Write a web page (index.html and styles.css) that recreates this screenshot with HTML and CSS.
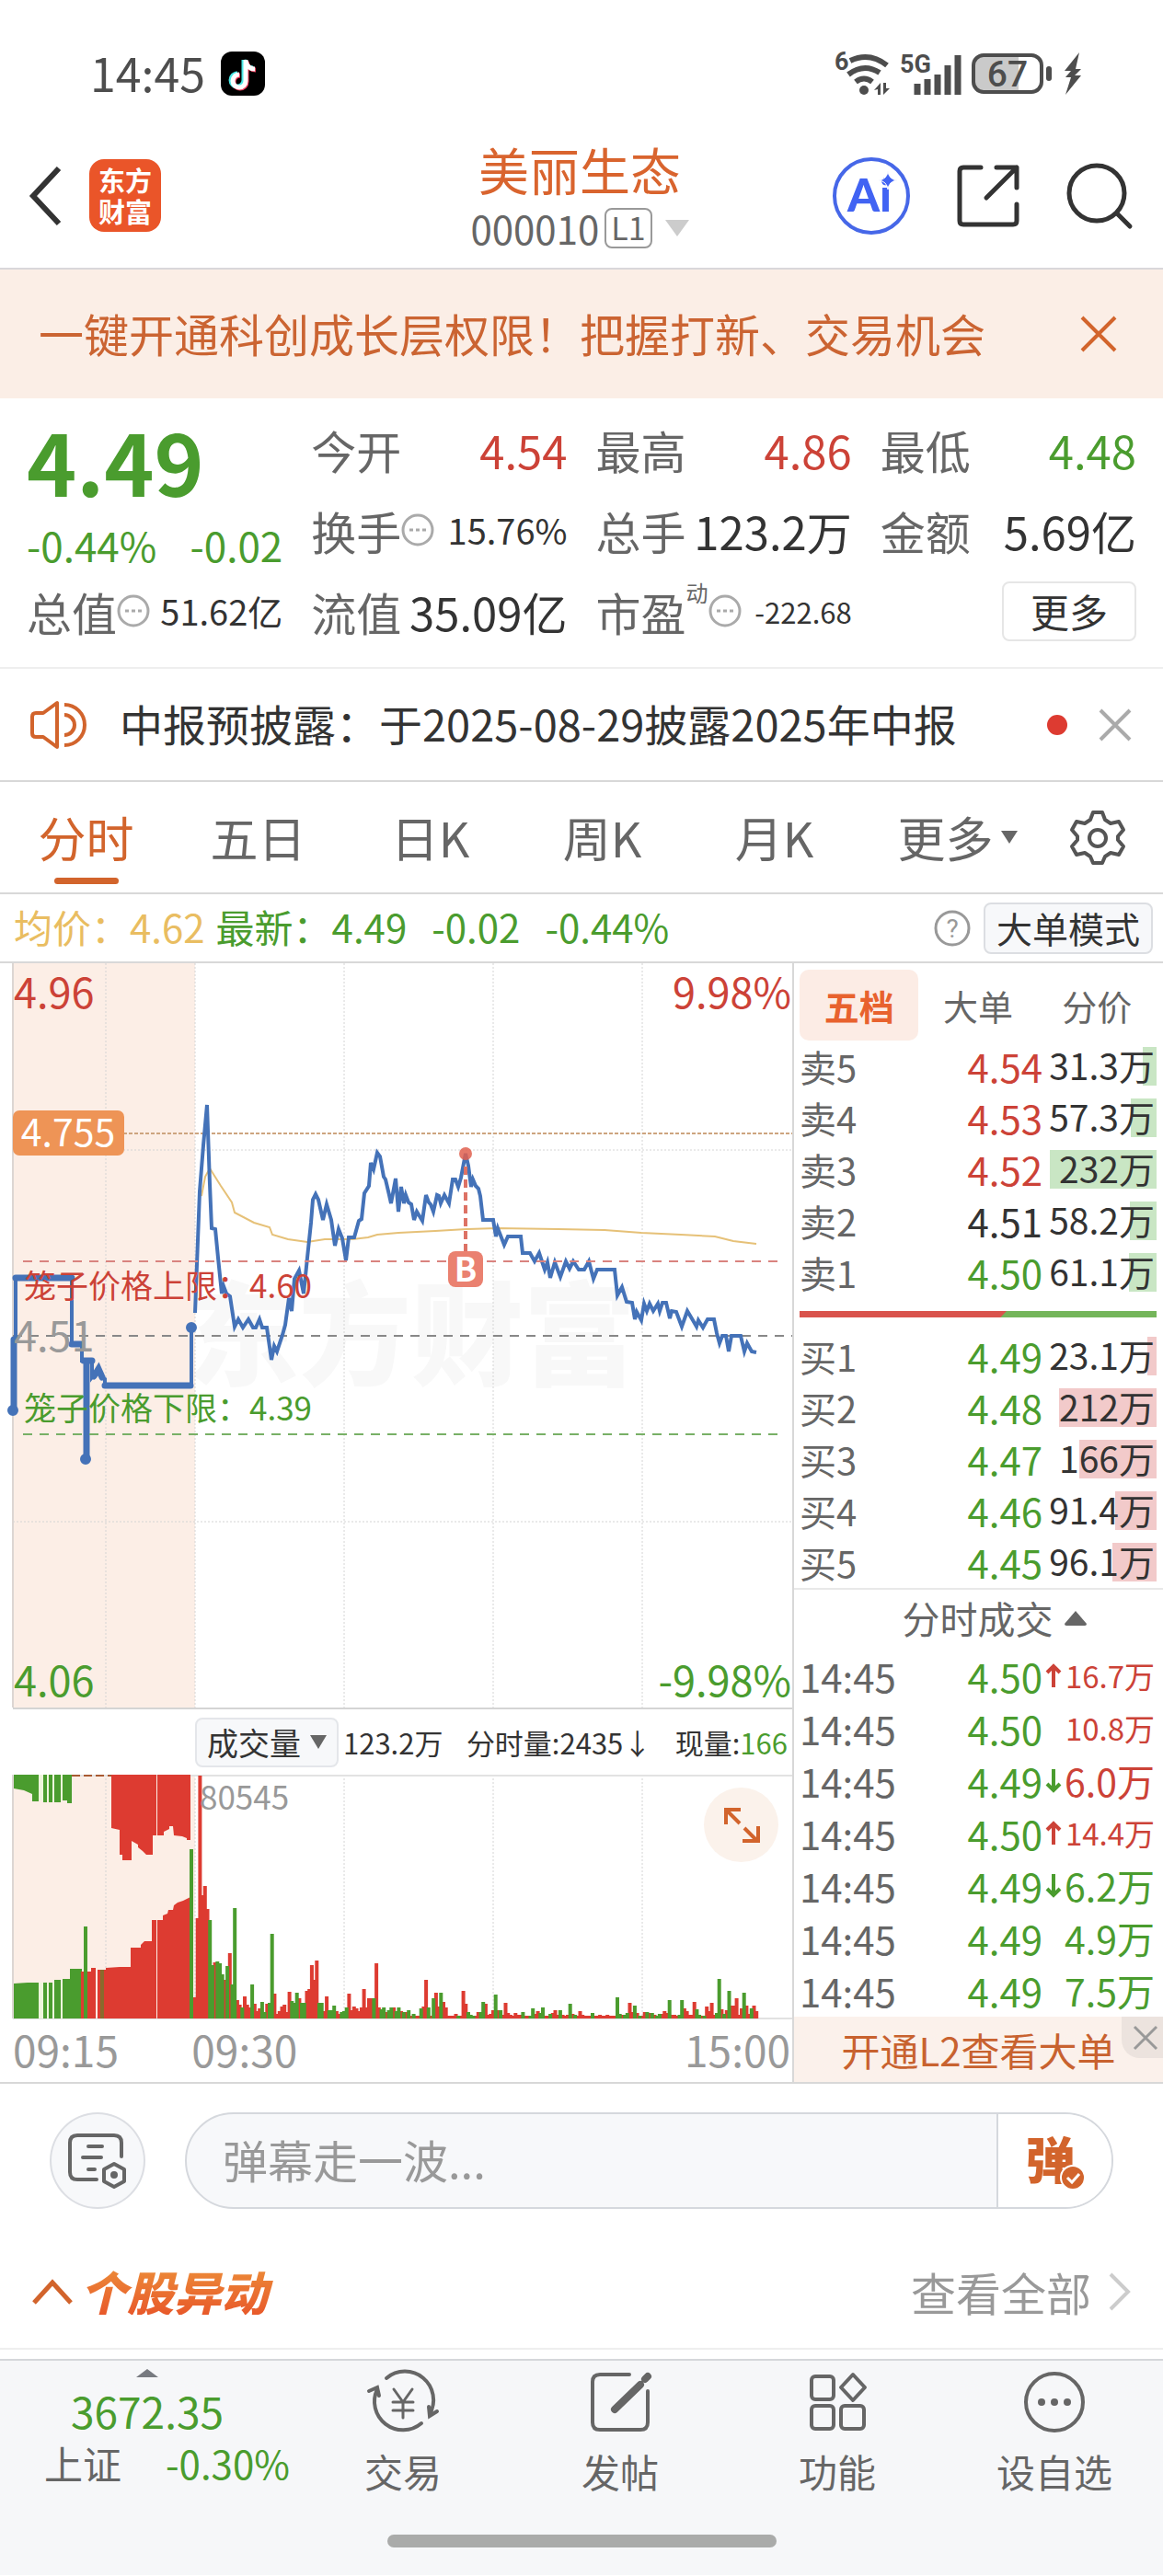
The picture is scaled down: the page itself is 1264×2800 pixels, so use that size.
FILE: index.html
```html
<!DOCTYPE html>
<html lang="zh-CN">
<head>
    <meta charset="UTF-8">
    <meta name="viewport" content="width=device-width, initial-scale=1.0">
    <title>美丽生态 000010</title>
    <link rel="stylesheet" href="styles.css">
</head>
<body>

<!-- 状态栏 -->
<div class="statusbar">
    <span class="clock">14:45</span>
    <svg class="tiktok" width="48" height="48" viewBox="0 0 48 48">
        <rect width="48" height="48" rx="12" fill="#000"/>
        <g fill="none" stroke-width="5">
            <path d="M25 9v22a7 7 0 1 1-7-7M25 9c1 6 5 9 10 9" stroke="#4de8e6"/>
            <path d="M28 11v22a7 7 0 1 1-7-7M28 11c1 6 5 9 10 9" stroke="#f0405f"/>
            <path d="M27 9v23a7 7 0 1 1-7-7M27 10c1 6 5 9 10 9" stroke="#fff"/>
        </g>
    </svg>
    <div class="status-icons">
        <svg width="62" height="48" viewBox="0 0 62 48">
            <text class="net-label" x="0" y="20">6</text>
            <g fill="none" stroke="#4d4d4d" stroke-width="6">
                <path d="M17 10Q38 0 57 15"/>
                <path d="M15 25Q32 12 49 23"/>
                <path d="M23 33Q32 26 41 33"/>
            </g>
            <circle cx="32" cy="42" r="5" fill="#4d4d4d"/>
            <path d="M43 42l7-8v13h-3v-6zM53 34h3v6h4l-7 7z" fill="#4d4d4d"/>
        </svg>
        <svg width="68" height="48" viewBox="0 0 68 48">
            <text class="net-label" x="0" y="23">5G</text>
            <path d="M19 35v12M30 30v17M41 25v22M52 15v32M63 4v43" stroke="#4d4d4d" stroke-width="7"/>
        </svg>
        <svg width="92" height="48" viewBox="0 0 92 48">
            <path d="M12 5h40v38h-40a8 8 0 0 1-8-8v-22a8 8 0 0 1 8-8z" fill="#cacaca"/>
            <rect x="3" y="4" width="74" height="40" rx="11" fill="none" stroke="#4d4d4d" stroke-width="4"/>
            <rect x="82" y="16" width="6" height="16" rx="3" fill="#4d4d4d"/>
            <text class="battery-text" x="40" y="38" text-anchor="middle">67</text>
        </svg>
        <svg width="20" height="48" viewBox="0 0 20 48">
            <path d="M17 1L1 21h7L2 28h6L2 47l17-21h-7l7-7h-6z" fill="#4d4d4d"/>
        </svg>
    </div>
</div>

<!-- 顶部标题 -->
<header class="header">
    <div class="header-left">
        <button class="icon-btn" aria-label="返回">
            <svg width="40" height="70" viewBox="0 0 40 70"><path d="M35 5L7 35l28 30" fill="none" stroke="#333" stroke-width="6"/></svg>
        </button>
        <a class="logo" href="#">东方<br>财富</a>
    </div>
    <div class="header-title">
        <h1>美丽生态</h1>
        <button class="code">
            <span>000010</span><span class="level">L1</span>
            <svg width="26" height="18" viewBox="0 0 26 18"><path d="M0 0h26L13 18z" fill="#ccc"/></svg>
        </button>
    </div>
    <div class="header-right">
        <button class="icon-btn" aria-label="Ai">
            <svg width="84" height="84" viewBox="0 0 84 84">
                <circle cx="42" cy="42" r="40" fill="#fff" stroke="#4667e8" stroke-width="4"/>
                <text class="ai-text" x="40" y="59" text-anchor="middle">Ai</text>
                <path d="M60 15q1 9 10 10-9 1-10 10-1-9-10-10 9-1 10-10z" fill="#4163f3" stroke="#fff" stroke-width="1"/>
            </svg>
        </button>
        <button class="icon-btn" aria-label="分享">
            <svg width="70" height="70" viewBox="0 0 70 70" fill="none" stroke="#333" stroke-width="5" stroke-linecap="round" stroke-linejoin="round">
                <path d="M27 4H8q-4 0-4 4v54q0 4 4 4h54q4 0 4-4V44M44 4h22v22M66 4L33 37"/>
            </svg>
        </button>
        <button class="icon-btn" aria-label="搜索">
            <svg width="72" height="72" viewBox="0 0 72 72" fill="none" stroke="#333" stroke-width="5" stroke-linecap="round">
                <circle cx="33" cy="33" r="30"/><path d="M55 55l14 14"/>
            </svg>
        </button>
    </div>
</header>

<!-- 开通提示 -->
<div class="banner">
    <a href="#">一键开通科创成长层权限！把握打新、交易机会</a>
    <button class="icon-btn" aria-label="关闭">
        <svg width="40" height="40" viewBox="0 0 40 40"><path d="M2 2l36 36M38 2L2 38" stroke="#d2642c" stroke-width="4"/></svg>
    </button>
</div>

<!-- 行情数据 -->
<section class="quote">
    <div class="quote-price">
        <strong>4.49</strong>
        <div class="quote-change"><span>-0.44%</span><span>-0.02</span></div>
    </div>
    <div class="cell"><span>今开</span><b class="up">4.54</b></div>
    <div class="cell"><span>最高</span><b class="up">4.86</b></div>
    <div class="cell"><span>最低</span><b class="down">4.48</b></div>
    <div class="cell"><span>换手<svg class="dots" viewBox="0 0 36 36"><circle cx="18" cy="18" r="16"/><path d="M9 18h4M16 18h4M23 18h4"/></svg></span><b class="medium">15.76%</b></div>
    <div class="cell"><span>总手</span><b>123.2万</b></div>
    <div class="cell"><span>金额</span><b>5.69亿</b></div>
    <div class="cell"><span>总值<svg class="dots" viewBox="0 0 36 36"><circle cx="18" cy="18" r="16"/><path d="M9 18h4M16 18h4M23 18h4"/></svg></span><b class="medium">51.62亿</b></div>
    <div class="cell"><span>流值</span><b>35.09亿</b></div>
    <div class="cell"><span>市盈<sup>动</sup><svg class="dots" viewBox="0 0 36 36"><circle cx="18" cy="18" r="16"/><path d="M9 18h4M16 18h4M23 18h4"/></svg></span><b class="small">-222.68</b></div>
    <div class="cell cell-more"><button class="more">更多</button></div>
</section>

<!-- 公告 -->
<div class="notice">
    <svg width="62" height="54" viewBox="0 0 62 54" fill="none" stroke="#d2642c" stroke-width="4" stroke-linejoin="round">
        <path d="M29 3v48L14 40H6q-4 0-4-4V18q0-4 4-4h8z"/>
        <path d="M37 5a22 22 0 0 1 0 44M37 16a11 11 0 0 1 0 22"/>
    </svg>
    <a href="#">中报预披露：于2025-08-29披露2025年中报</a>
    <i class="red-dot"></i>
    <button class="icon-btn" aria-label="关闭公告">
        <svg width="36" height="36" viewBox="0 0 36 36"><path d="M2 2l32 32M34 2L2 34" stroke="#aaa" stroke-width="4"/></svg>
    </button>
</div>

<nav class="tabs">
    <button class="tab active">分时</button>
    <button class="tab">五日</button>
    <button class="tab">日K</button>
    <button class="tab">周K</button>
    <button class="tab">月K</button>
    <button class="tab">更多<svg width="18" height="16" viewBox="0 0 18 16"><path d="M0 1h18L9 15z" fill="#666"/></svg></button>
    <button class="tab settings" aria-label="设置">
        <svg width="60" height="60" viewBox="0 0 60 60" fill="none" stroke="#555" stroke-width="4" stroke-linejoin="round">
            <path d="M25 3h10l3 8 6 4 9-2 5 9-6 7v4l6 7-5 9-9-2-6 4-3 7H25l-3-7-6-4-9 2-5-9 6-7v-4l-6-7 5-9 9 2 6-4z"/>
            <circle cx="30" cy="31" r="9"/>
        </svg>
    </button>
</nav>

<div class="info">
    <span class="avg">均价：4.62</span>
    <span class="down">最新：4.49</span>
    <span class="down info-delta">-0.02</span>
    <span class="down info-delta">-0.44%</span>
    <button class="icon-btn help" aria-label="帮助">
        <svg width="40" height="40" viewBox="0 0 40 40"><circle cx="20" cy="20" r="18" fill="none" stroke="#999" stroke-width="3"/><text class="help-text" x="20" y="30" text-anchor="middle">?</text></svg>
    </button>
    <button class="mode">大单模式</button>
</div>

<main class="main">
    <div class="charts">
        <!-- 分时走势 -->
        <svg class="chart" viewBox="0 0 861 811">
            <text class="watermark" x="203" y="449">东方财富</text>
            <rect x="14" y="0" width="198" height="809" fill="#fceee6"/>
            <g class="grid">
                <path d="M115 0V809M212 0V809M374 0V809M536 0V809M698 0V809M14 203H861M14 607H861"/>
            </g>
            <path d="M14 0V809" stroke="#dcd6d3" stroke-width="2"/>
            <path d="M14 810H861" stroke="#d4d4d4" stroke-width="2"/>
            <path d="M14 185H861" stroke="#cda47f" stroke-width="2" stroke-dasharray="4 2"/>
            <path d="M14 405H861" stroke="#888" stroke-width="2" stroke-dasharray="10 8"/>

            <polyline class="avg-line" points="219,253 223,232 228,223 240,242 252,260 255,271 276,282 293,287 296,295 313,300 334,303 353,300 383,300 400,298 410,295 433,293 473,291 507,289 540,288 607,289 657,290 697,293 740,295 777,297 797,302 822,305"/>

            <!-- 集合竞价 -->
            <g class="pre-line">
                <path d="M17 410V342H78V414H89V432H100V450L107 441 110 450 114 452V459H208V396"/>
                <path class="thick" d="M15 409V486M17 342H78M78 414H88M91 432H100M94 434V539M102 449L107 441 111 450M114 459H207"/>
                <circle cx="14" cy="486" r="4"/><circle cx="93" cy="539" r="4"/><circle cx="208" cy="396" r="4"/>
            </g>

            <polyline class="price-line" points="212,380 215,301 217,248 221,198 225,154 228,240 230,288 234,289 237,320 241,359 243,351 246,359 250,362 255,395 259,387 264,396 270,387 275,396 278,396 282,387 285,396 290,396 295,431 298,416 301,422 307,404 310,393 314,364 317,378 320,343 325,334 330,359 334,320 338,282 340,257 343,251 346,257 351,279 355,262 360,279 364,307 368,289 372,299 376,323 379,298 385,298 390,280 393,278 396,250 401,242 403,217 406,224 410,206 413,210 417,232 419,235 423,252 425,261 430,234 433,270 436,243 439,261 441,252 444,260 447,262 450,279 453,270 459,280 463,252 466,260 468,262 471,270 475,252 477,253 479,261 483,252 488,261 492,235 495,235 498,243 501,233 506,207 509,220 512,243 514,235 517,242 520,245 522,253 525,279 536,279 539,297 541,288 548,306 552,297 566,297 568,315 576,315 581,324 586,315 592,333 595,325 598,342 603,325 609,341 615,324 619,332 623,324 629,333 635,333 640,324 645,343 649,333 668,333 671,361 676,352 681,368 687,369 690,387 692,379 697,388 700,370 703,378 706,370 710,378 715,370 717,378 720,369 724,369 728,386 730,378 735,379 741,395 747,378 753,388 757,395 759,388 764,396 769,387 776,387 779,402 782,413 785,405 789,405 792,422 795,405 805,405 809,422 812,413 817,422 822,423"/>

            <path d="M25 324H848" stroke="#d9837f" stroke-width="2" stroke-dasharray="10 8"/>
            <path d="M25 512H848" stroke="#78b066" stroke-width="2" stroke-dasharray="10 8"/>
            <text class="cage up" x="26" y="364">笼子价格上限：4.60</text>
            <text class="cage down" x="26" y="497">笼子价格下限：4.39</text>

            <text class="axis up" x="15" y="49">4.96</text>
            <text class="axis up" x="860" y="49" text-anchor="end">9.98%</text>
            <text class="axis mid" x="15" y="422">4.51</text>
            <text class="axis down" x="15" y="797">4.06</text>
            <text class="axis down" x="860" y="797" text-anchor="end">-9.98%</text>

            <rect x="14" y="160" width="121" height="49" rx="7" fill="#ee9456"/>
            <text class="badge-text" x="74" y="199" text-anchor="middle">4.755</text>

            <!-- 买入点 -->
            <path d="M506 221V313" stroke="#dd7265" stroke-width="4" stroke-dasharray="9 5"/>
            <circle cx="506" cy="207" r="7" fill="#e0604f" fill-opacity=".85"/>
            <rect x="487" y="313" width="38" height="39" rx="8" fill="#ea8170"/>
            <text class="buy-text" x="506" y="346" text-anchor="middle">B</text>
        </svg>

        <div class="volume-bar">
            <div class="select">
                <select aria-label="指标"><option>成交量</option></select>
                <svg width="18" height="15" viewBox="0 0 18 15"><path d="M0 0h18L9 15z" fill="#666"/></svg>
            </div>
            <div class="volume-nums">
                <span>123.2万</span>
                <span>分时量:2435↓</span>
                <span>现量:<em class="down">166</em></span>
            </div>
        </div>

        <!-- 成交量 -->
        <div class="volume">
            <svg class="chart" viewBox="0 0 861 266">
                <rect x="14" y="0" width="198" height="265" fill="#fceee6"/>
                <g class="grid"><path d="M115 0V265M212 0V265M374 0V265M536 0V265M698 0V265"/></g>
                <path d="M14 0V265" stroke="#dcd6d3" stroke-width="2"/>
                <path d="M14 1H861M14 265H861" stroke="#e2e2e2" stroke-width="2"/>
                <path d="M42 0h26v28H42zM42 226h26v39H42z" fill="#eef5dc"/>
                <g fill="#4a9c2e">
                    <path d="M15 0V15L26 17 35 21V29H42V0zM47 0h4v30h-4zM53 0h4v30h-4zM59 0h7v30h-7zM68 0V28H73V31H78V0z"/>
                    <path d="M15 265V227L30 226H42V265zM47 226h4v39h-4zM53 226h4v39h-4zM59 223h7v42h-7zM68 222H76V211H89V265H68z"/>
                </g>
                <path d="M78 1H121" stroke="#a85a32" stroke-width="2" stroke-dasharray="9 4"/>
                <g fill="#dd3b31">
                    <path d="M121 0V58L130 60V87H133V93H143V72L150 76V79L155 83 159 87H166V66H170V0zM171 0V66H178V62L184 59V56H188L189 66 198 67 203 69V71H207V0z"/>
                    <path d="M88 265V214H99V210H104V265zM106 265V212H115V210L130 209H142V188H153V185L157 181H165V158H170V265zM171 265V158H177V153L182 151 183 147H188L189 142 193 139 199 137 207 133V265z"/>
                </g>
                <path d="M109 212h4v53h-4z" fill="#8a6a2c"/>
                <path d="M91 165h4v100h-4zM206 81h4v184h-4z" fill="#4a9c2e"/>
                <path id="volUp" stroke="#dd3b31" stroke-width="4"/>
                <path id="volDown" stroke="#4a9c2e" stroke-width="4"/>
                <text class="volume-max" x="217" y="38">80545</text>
            </svg>
            <button class="expand" aria-label="全屏">
                <svg width="40" height="40" viewBox="0 0 40 40" fill="none" stroke="#d2642c" stroke-width="4"><path d="M19 3H3v16M3 3l15 15M21 37h17V21M37 37L23 23"/></svg>
            </button>
        </div>
        <div class="times"><span>09:15</span><span>09:30</span><span>15:00</span></div>
    </div>

    <!-- 五档盘口 -->
    <aside class="side">
        <div class="side-tabs">
            <button class="active">五档</button>
            <button>大单</button>
            <button>分价</button>
        </div>
        <table class="book sell">
            <tr><th>卖5</th><td class="up">4.54</td><td class="qty"><i style="width:13%"></i><span>31.3万</span></td></tr>
            <tr><th>卖4</th><td class="up">4.53</td><td class="qty"><i style="width:24%"></i><span>57.3万</span></td></tr>
            <tr><th>卖3</th><td class="up">4.52</td><td class="qty"><i style="width:100%"></i><span>232万</span></td></tr>
            <tr><th>卖2</th><td>4.51</td><td class="qty"><i style="width:25%"></i><span>58.2万</span></td></tr>
            <tr><th>卖1</th><td class="down">4.50</td><td class="qty"><i style="width:26%"></i><span>61.1万</span></td></tr>
        </table>
        <div class="ratio"><i style="width:58%"></i></div>
        <table class="book buy">
            <tr><th>买1</th><td class="down">4.49</td><td class="qty"><i style="width:9%"></i><span>23.1万</span></td></tr>
            <tr><th>买2</th><td class="down">4.48</td><td class="qty"><i style="width:91%"></i><span>212万</span></td></tr>
            <tr><th>买3</th><td class="down">4.47</td><td class="qty"><i style="width:72%"></i><span>166万</span></td></tr>
            <tr><th>买4</th><td class="down">4.46</td><td class="qty"><i style="width:39%"></i><span>91.4万</span></td></tr>
            <tr><th>买5</th><td class="down">4.45</td><td class="qty"><i style="width:41%"></i><span>96.1万</span></td></tr>
        </table>
        <button class="deals-title">分时成交<svg width="24" height="16" viewBox="0 0 24 16"><path d="M12 0l12 14q0 2-2 2H2q-2 0-2-2z" fill="#666"/></svg></button>
        <table class="deals">
            <tr><th>14:45</th><td class="down">4.50</td><td class="arrow up"><svg viewBox="0 0 18 27"><path d="M9 26V3M2 10l7-7 7 7"/></svg></td><td class="up small">16.7万</td></tr>
            <tr><th>14:45</th><td class="down">4.50</td><td class="arrow"></td><td class="up small">10.8万</td></tr>
            <tr><th>14:45</th><td class="down">4.49</td><td class="arrow down"><svg viewBox="0 0 18 27"><path d="M9 1v23M2 17l7 7 7-7"/></svg></td><td class="up">6.0万</td></tr>
            <tr><th>14:45</th><td class="down">4.50</td><td class="arrow up"><svg viewBox="0 0 18 27"><path d="M9 26V3M2 10l7-7 7 7"/></svg></td><td class="up small">14.4万</td></tr>
            <tr><th>14:45</th><td class="down">4.49</td><td class="arrow down"><svg viewBox="0 0 18 27"><path d="M9 1v23M2 17l7 7 7-7"/></svg></td><td class="down">6.2万</td></tr>
            <tr><th>14:45</th><td class="down">4.49</td><td class="arrow"></td><td class="down">4.9万</td></tr>
            <tr><th>14:45</th><td class="down">4.49</td><td class="arrow"></td><td class="down">7.5万</td></tr>
        </table>
        <div class="promo">
            <a href="#">开通L2查看大单</a>
            <button class="promo-close" aria-label="关闭">
                <svg width="26" height="26" viewBox="0 0 26 26"><path d="M1 1l24 24M25 1L1 25" stroke="#999" stroke-width="3"/></svg>
            </button>
        </div>
    </aside>
</main>

<!-- 弹幕 -->
<div class="danmu">
    <button class="danmu-list" aria-label="弹幕设置">
        <svg width="66" height="62" viewBox="0 0 66 62" fill="none" stroke="#666" stroke-width="4" stroke-linecap="round" stroke-linejoin="round">
            <path d="M32 51H11q-8 0-8-8V11q0-8 8-8h40q8 0 8 8v15M23 15h15M17 27h20M23 40h7"/>
            <path d="M51 34l11 6v13l-11 6-11-6V40z"/><circle cx="51" cy="46" r="2"/>
        </svg>
    </button>
    <div class="danmu-box">
        <input type="text" aria-label="弹幕" placeholder="弹幕走一波...">
        <button class="danmu-switch">弹<svg width="28" height="28" viewBox="0 0 28 28"><circle cx="14" cy="14" r="13" fill="#d2642c" stroke="#fff" stroke-width="2"/><path d="M8 14l5 5 8-9" fill="none" stroke="#fff" stroke-width="3"/></svg></button>
    </div>
</div>

<div class="moves">
    <svg width="44" height="28" viewBox="0 0 44 28"><path d="M2 26L22 4l20 22" fill="none" stroke="#d2642c" stroke-width="5"/></svg>
    <h2>个股异动</h2>
    <a href="#">查看全部<svg width="26" height="44" viewBox="0 0 26 44"><path d="M3 3l19 19L3 41" fill="none" stroke="#ccc" stroke-width="4"/></svg></a>
</div>

<!-- 底部导航 -->
<footer class="footer">
    <div class="bottom">
        <a class="index" href="#">
            <svg width="24" height="9" viewBox="0 0 24 9"><path d="M12 0l12 9H0z" fill="#777a80"/></svg>
            <span class="down index-value">3672.35</span>
            <span class="index-row"><span>上证</span><span class="down">-0.30%</span></span>
        </a>
        <a href="#">
            <svg width="76" height="68" viewBox="0 0 76 68" fill="none" stroke="#666" stroke-width="4" stroke-linecap="round">
                <path d="M20 8a31 31 0 0 1 47 39M58 57A31 31 0 0 1 10 20M1 22l9-4 2 9M75 44l-8 5-1-10"/>
                <path d="M28 20l10 14 10-14M38 34v17M27 34h22M27 43h22" stroke-width="3"/>
            </svg>
            交易
        </a>
        <a href="#">
            <svg width="68" height="68" viewBox="0 0 68 68" fill="none" stroke="#666" stroke-width="4" stroke-linecap="round">
                <path d="M44 4H12q-8 0-8 8v44q0 8 8 8h44q8 0 8-8V22"/>
                <path d="M28 42L56 15M61 9l3-3" stroke-width="8"/>
            </svg>
            发帖
        </a>
        <a href="#">
            <svg width="68" height="68" viewBox="0 0 68 68" fill="none" stroke="#666" stroke-width="4" stroke-linejoin="round">
                <rect x="6" y="6" width="24" height="25" rx="4"/><rect x="6" y="38" width="24" height="25" rx="4"/><rect x="38" y="38" width="25" height="25" rx="4"/>
                <path d="M51 4l13 14-13 14-13-14z"/>
            </svg>
            功能
        </a>
        <a href="#">
            <svg width="68" height="68" viewBox="0 0 68 68" fill="none" stroke="#666" stroke-width="4">
                <circle cx="34" cy="34" r="31"/>
                <g fill="#666" stroke="none"><circle cx="20" cy="34" r="4"/><circle cx="34" cy="34" r="4"/><circle cx="48" cy="34" r="4"/></g>
            </svg>
            设自选
        </a>
    </div>
    <div class="home-bar"></div>
</footer>

<script src="chart.js"></script>
</body>
</html>
```
FILE: styles.css
```css
* {
    box-sizing: border-box;
}
body {
    margin: 0;
    background-color: #fff;
    color: #333;
    font-family: "Noto Sans CJK SC", "Noto Sans", sans-serif;
    font-size: 49px;
    line-height: 1;
}
button, input, select {
    font: inherit;
    color: inherit;
    background: none;
    border: none;
    padding: 0;
    margin: 0;
}
button {
    cursor: pointer;
}
a {
    color: inherit;
    text-decoration: none;
}
svg {
    display: block;
    flex: none;
    overflow: visible;
}
b, em, i, th {
    font-weight: 400;
    font-style: normal;
}
.up {
    color: #cc4237;
    fill: #cc4237;
}
.down {
    color: #4a9c2e;
    fill: #4a9c2e;
}
.icon-btn {
    display: flex;
}

/* 状态栏 */
.statusbar {
    display: flex;
    align-items: center;
    height: 134px;
    padding: 26px 88px 0 98px;
}
.clock {
    padding-bottom: 5px;
    font-size: 50px;
    color: #4d4d4d;
}
.tiktok {
    margin-left: 17px;
}
.status-icons {
    display: flex;
    gap: 9px;
    margin-left: auto;
}
.net-label {
    font-size: 27px;
    font-weight: 700;
    fill: #4d4d4d;
    font-family: Roboto, sans-serif;
}
.battery-text {
    font-size: 39px;
    font-weight: 500;
    fill: #4d4d4d;
    font-family: Roboto, sans-serif;
}

/* 标题 */
.header {
    display: grid;
    grid-template-columns: 1fr auto 1fr;
    align-items: center;
    min-height: 159px;
    padding: 0 33px 0 29px;
    border-bottom: 2px solid #d9d7da;
}
.header-left, .header-right {
    display: flex;
    align-items: center;
}
.header-left {
    gap: 28px;
}
.header-right {
    justify-content: flex-end;
    gap: 50px;
}
.logo {
    width: 78px;
    height: 79px;
    padding-top: 5px;
    border-radius: 16px;
    background-color: #ea5529;
    color: #fff;
    font-size: 29px;
    font-weight: 700;
    line-height: 34px;
    text-align: center;
}
.header-title {
    display: flex;
    flex-direction: column;
    align-items: center;
    gap: 16px;
}
h1 {
    margin: 0;
    font-size: 55px;
    font-weight: 400;
    color: #d9642e;
}
.code {
    display: flex;
    align-items: center;
    height: 42px;
    color: #666;
    font-size: 42px;
}
.level {
    margin: 0 14px 0 6px;
    padding: 2px 5px 4px;
    border: 2px solid #999;
    border-radius: 8px;
    font-size: 34px;
}
.ai-text {
    font-family: Lato, sans-serif;
    font-size: 50px;
    font-weight: 900;
    fill: #4163f3;
}

/* 提示条 */
.banner {
    display: flex;
    align-items: center;
    justify-content: space-between;
    min-height: 140px;
    padding: 0 50px 0 42px;
    background-color: #fbeee6;
    color: #cb6432;
}
.banner a {
    padding-bottom: 4px;
}

/* 行情 */
.quote {
    display: grid;
    grid-template-columns: repeat(4, 1fr);
    grid-auto-rows: 88px;
    column-gap: 31px;
    padding: 11px 29px 17px 29px;
    border-bottom: 2px solid #eee;
}
.quote-price {
    grid-row: span 2;
    color: #4a9c2e;
}
.quote-price strong {
    display: block;
    padding-top: 10px;
    font-size: 92px;
    font-weight: 700;
}
.quote-change {
    display: flex;
    justify-content: space-between;
    margin-top: 24px;
    font-size: 44px;
}
.cell {
    display: flex;
    align-items: center;
    justify-content: space-between;
    white-space: nowrap;
}
.cell span {
    display: flex;
    align-items: center;
    color: #666;
}
.cell .medium {
    font-size: 38px;
}
.cell .small {
    font-size: 31px;
}
.cell sup {
    align-self: flex-start;
    margin-top: -8px;
    font-size: 24px;
}
.dots {
    width: 36px;
    height: 36px;
    fill: none;
    stroke: #aaa;
    stroke-width: 3;
}
.cell-more {
    justify-content: flex-end;
}
.more {
    width: 146px;
    height: 65px;
    border: 2px solid #e6e6e6;
    border-radius: 8px;
    font-size: 42px;
}

/* 公告 */
.notice {
    display: flex;
    align-items: center;
    min-height: 123px;
    padding: 0 34px 0 33px;
    border-bottom: 2px solid #d8d8d8;
    font-size: 47px;
}
.notice a {
    flex: 1;
    margin-left: 35px;
    padding-bottom: 5px;
    white-space: nowrap;
}
.red-dot {
    width: 22px;
    height: 22px;
    margin-right: 34px;
    border-radius: 50%;
    background-color: #dd3b31;
}

/* 周期切换 */
.tabs {
    display: grid;
    grid-template-columns: repeat(5, 187fr) 211fr 118fr;
    min-height: 122px;
    border-bottom: 2px solid #d8d8d8;
}
.tab {
    display: flex;
    align-items: center;
    justify-content: center;
    gap: 8px;
    color: #666;
    font-size: 52px;
    position: relative;
}
.tab.active {
    color: #d2642c;
}
.tab.active::after {
    content: "";
    position: absolute;
    bottom: 9px;
    width: 70px;
    height: 7px;
    border-radius: 4px;
    background-color: #d2642c;
}
.tab.settings {
    padding-right: 24px;
}

.info {
    display: flex;
    align-items: center;
    min-height: 75px;
    padding: 0 11px 0 15px;
    border-bottom: 2px solid #d8d8d8;
    font-size: 42px;
}
.info span {
    padding-bottom: 4px;
}
.avg {
    margin-right: 12px;
    color: #e9bd61;
}
.info-delta {
    margin-left: 27px;
}
.help {
    margin: 0 14px 0 auto;
}
.help-text {
    font-family: Roboto, sans-serif;
    font-size: 28px;
    fill: #999;
}
.mode {
    padding: 0 12px;
    height: 56px;
    border: 2px solid #dcdee2;
    border-radius: 8px;
    background-color: #f7f8fa;
    font-size: 39px;
}

/* 主体 */
.main {
    display: grid;
    grid-template-columns: 861fr 403fr;
    border-bottom: 2px solid #d8d8d8;
}
.chart {
    width: 100%;
    height: auto;
}
.grid {
    fill: none;
    stroke: #d4d4d4;
    stroke-width: 1;
    stroke-dasharray: 2 2;
}
.watermark {
    font-size: 122px;
    font-weight: 900;
    fill: #f8f8f8;
}
.price-line, .avg-line, .pre-line path {
    fill: none;
}
.price-line {
    stroke: #4472b8;
    stroke-width: 4;
}
.avg-line {
    stroke: #e6c178;
    stroke-width: 2;
}
.pre-line {
    fill: #4472b8;
    stroke: #4472b8;
    stroke-width: 4;
}
.pre-line .thick {
    stroke-width: 7;
    stroke-linecap: round;
}
.cage {
    font-size: 35px;
}
.axis {
    font-size: 45px;
}
.mid {
    fill: #999;
}
.badge-text {
    font-size: 41px;
    fill: #fff;
}
.buy-text {
    font-size: 36px;
    font-weight: 700;
    fill: #fff;
}
.volume-bar {
    display: flex;
    align-items: center;
    height: 71px;
    padding: 0 5px 0 212px;
    font-size: 31px;
    white-space: nowrap;
}
.select {
    display: flex;
    align-items: center;
    height: 54px;
    padding: 0 11px;
    gap: 10px;
    border: 2px solid #e4e6ea;
    border-radius: 8px;
    background-color: #f7f8fa;
}
.select select {
    appearance: none;
    font-size: 34px;
}
.volume-nums {
    display: flex;
    flex: 1;
    justify-content: space-between;
    margin-left: 5px;
}
.volume {
    position: relative;
}
.volume-max {
    font-size: 35px;
    fill: #999;
}
.expand {
    position: absolute;
    top: 14px;
    right: 15px;
    display: flex;
    align-items: center;
    justify-content: center;
    width: 81px;
    height: 81px;
    border-radius: 50%;
    background-color: #fbf2eb;
}
.times {
    display: grid;
    grid-template-columns: 23% 1fr auto;
    align-items: center;
    height: 68px;
    padding: 0 2px 4px 14px;
    color: #999;
    font-size: 46px;
}

/* 右侧盘口 */
.side {
    display: flex;
    flex-direction: column;
    border-left: 2px solid #d8d8d8;
}
.side-tabs {
    display: grid;
    grid-template-columns: repeat(3, 1fr);
    margin: 7px 7px 0 6px;
}
.side-tabs button {
    height: 77px;
    border-radius: 10px;
    color: #666;
    font-size: 38px;
}
.side-tabs .active {
    background-color: #fcece5;
    color: #e8622e;
    font-weight: 700;
}
table {
    margin: 0 7px 0 6px;
}
th, td {
    padding: 0;
    text-align: right;
    white-space: nowrap;
}
th {
    text-align: left;
    color: #666;
}
.book, .book tbody, .deals, .deals tbody {
    display: block;
}
.book tr {
    display: grid;
    grid-template-columns: 100px 1fr 124px;
    align-items: center;
    height: 56px;
}
.book th {
    font-size: 40px;
}
.book td {
    font-size: 42px;
}
.book .qty {
    display: flex;
    align-items: center;
    justify-content: flex-end;
    position: relative;
    height: 42px;
    margin-left: 8px;
    font-size: 39px;
}
.qty i {
    position: absolute;
    top: 0;
    right: 0;
    height: 100%;
    background-color: #c9e6c4;
}
.buy .qty i {
    background-color: #f2caca;
}
.qty span {
    position: relative;
    padding: 0 2px 4px 0;
}
.ratio {
    margin: 14px 7px 14px 6px;
    background-color: #74b55a;
}
.ratio i {
    display: block;
    height: 7px;
    background-color: #d9534c;
    clip-path: polygon(0 0, 100% 0, 97% 100%, 0 100%);
}
.deals-title {
    display: flex;
    align-items: center;
    justify-content: center;
    gap: 12px;
    height: 67px;
    padding: 0 0 4px 34px;
    border-top: 2px solid #e8e8e8;
    color: #666;
    font-size: 41px;
}
.deals {
    font-size: 42px;
}
.deals tr {
    display: grid;
    grid-template-columns: 120px 1fr 24px 100px;
    align-items: center;
    height: 57px;
}
.deals td:last-child {
    padding-right: 2px;
    font-size: 41px;
}
.deals td.small {
    font-size: 33px;
}
.arrow svg {
    width: 18px;
    height: 27px;
    margin: 0 auto;
    fill: none;
    stroke: currentColor;
    stroke-width: 4;
}
.promo {
    position: relative;
    display: flex;
    flex: 1;
    align-items: center;
    justify-content: center;
    min-height: 69px;
    background-color: #fbf1eb;
    color: #c8622f;
    font-size: 42px;
}
.promo-close {
    position: absolute;
    top: 0;
    right: 0;
    display: flex;
    align-items: center;
    justify-content: center;
    width: 45px;
    height: 45px;
    padding-left: 7px;
    border-radius: 0 0 0 20px;
    background-color: #ece3de;
}

/* 弹幕 */
.danmu {
    display: flex;
    gap: 43px;
    padding: 31px 54px 0;
}
.danmu-list {
    display: flex;
    align-items: center;
    justify-content: center;
    width: 104px;
    height: 105px;
    border: 2px solid #dcdee3;
    border-radius: 50%;
    background-color: #f7f8fa;
}
.danmu-box {
    display: flex;
    flex: 1;
    height: 105px;
    border: 2px solid #d5d8dd;
    border-radius: 53px;
    background-color: #f7f8fa;
    overflow: hidden;
}
.danmu-box input {
    flex: 1;
    min-width: 0;
    padding: 0 0 4px 39px;
}
.danmu-box input::placeholder {
    color: #999;
    opacity: 1;
}
.danmu-switch {
    position: relative;
    width: 125px;
    padding: 0 10px 6px 0;
    border-left: 2px solid #d5d8dd;
    background-color: #fff;
    color: #d2642c;
    font-size: 54px;
    font-weight: 900;
}
.danmu-switch svg {
    position: absolute;
    right: 28px;
    bottom: 18px;
}

.moves {
    display: flex;
    align-items: center;
    height: 153px;
    padding: 28px 34px 0 35px;
    border-bottom: 2px solid #eee;
}
.moves h2 {
    margin: 0 0 0 8px;
    padding-right: 10px;
    font-size: 51px;
    font-weight: 900;
    font-style: italic;
    background: linear-gradient(#ec8a38, #e8592a);
    background-clip: text;
    -webkit-background-clip: text;
    color: transparent;
}
.moves a {
    display: flex;
    align-items: center;
    gap: 18px;
    margin-left: auto;
    color: #999;
}

/* 底部 */
.footer {
    margin-top: 10px;
    min-height: 235px;
    border-top: 2px solid #d5d7db;
    background-color: #f6f7f9;
}
.bottom {
    display: grid;
    grid-template-columns: 320fr repeat(4, 236fr);
    color: #666;
    font-size: 42px;
}
.bottom a {
    display: flex;
    flex-direction: column;
    align-items: center;
    gap: 20px;
    padding-top: 11px;
}
.bottom .index {
    gap: 13px;
    padding-top: 9px;
}
.index-value {
    font-size: 46px;
}
.index-row {
    display: flex;
    gap: 48px;
    align-self: flex-start;
    padding-left: 48px;
}
.home-bar {
    width: 423px;
    height: 14px;
    margin: 48px auto 0;
    border-radius: 7px;
    background-color: #aaabaa;
}
```
FILE: chart.js
```js
// 每分钟成交量，正数为红，负数为绿
const volumes = [
    23, 109, 264, 134, 144, 119, -107, -58, 61, -62, -60, -48, 42, -57, 71, -37, -120, 20, 15, -12,
    24, 15, 12, -37, 16, 8, 11, -18, -7, 16, -17, -92, 27, 5, 8, 13, 15, 7, 29, -19,
    -17, -28, 22, -17, -17, 30, 32, 58, 42, 63, -17, -17, 8, 24, -9, -9, -14, 8, 5, -7,
    -8, -12, 27, 9, 13, 11, 8, 12, 32, 12, 22, 22, -22, 60, 12, -10, -12, 7, -9, -12,
    12, -8, -12, 8, -7, 7, -9, 3, -5, 3, 3, -11, 13, 42, -12, 3, -22, 28, 13, -28,
    18, 12, 3, 3, 3, 5, -3, 3, 30, 16, -7, -4, -3, 3, 7, -7, -18, 16, 4, 5,
    9, -26, 9, -9, 4, 17, 6, 4, 3, 6, 4, 4, -7, 3, 3, -3, -11, 5, 8, -6,
    -12, 3, 3, -5, 6, 9, 4, -9, 4, 3, 4, -16, 5, -4, 3, 8, 4, 3, 3, 3,
    -6, 3, 3, 4, 3, 3, 4, 3, 3, 3, -23, -5, 4, -4, -6, 17, 7, -14, 6, -3,
    3, 7, -7, 6, -6, 4, -3, -5, 5, 8, 6, -20, 4, 4, 3, -4, -20, 11, 8, 4,
    4, 18, -10, -4, 3, -3, 13, 8, 17, 4, -6, -43, 10, -5, 9, -30, 14, 14, 22, 4,
    11, -28, 14, 5, -11, 14, 8
];

let up = '';
let down = '';
volumes.forEach((v, i) => {
    const x = Math.round((212 + i * 2.7) * 10) / 10;
    const bar = `M${x} 265V${265 - Math.abs(v)}`;
    if (v > 0) {
        up += bar;
    } else {
        down += bar;
    }
});
document.getElementById('volUp').setAttribute('d', up);
document.getElementById('volDown').setAttribute('d', down);
```
